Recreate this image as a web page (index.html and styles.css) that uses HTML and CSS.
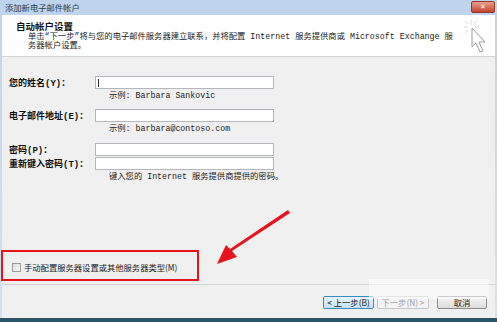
FILE: index.html
```html
<!DOCTYPE html>
<html lang="zh-CN">
<head>
    <meta charset="UTF-8">
    <title>添加新电子邮件帐户</title>
    <link rel="stylesheet" href="styles.css">
</head>
<body>
    <div class="window">
        <div class="titlebar">
            <span class="title">添加新电子邮件帐户</span>
            <span class="close-btn">✕</span>
        </div>
        <div class="client">
            <div class="header">
                <div class="header-title">自动帐户设置</div>
                <div class="header-desc">单击“下一步”将与您的电子邮件服务器建立联系，并将配置 Internet 服务提供商或 Microsoft Exchange 服<br>务器帐户设置。</div>
            </div>
            <div class="form">
                <div class="row">
                    <label class="form-label">您的姓名(Y)：</label>
                    <div class="input-field"><span class="caret"></span></div>
                </div>
                <div class="hint">示例: Barbara Sankovic</div>
                <div class="row spaced">
                    <label class="form-label">电子邮件地址(E)：</label>
                    <div class="input-field"></div>
                </div>
                <div class="hint">示例: barbara@contoso.com</div>
                <div class="row spaced-lg">
                    <label class="form-label">密码(P)：</label>
                    <div class="input-field"></div>
                </div>
                <div class="row spaced-sm">
                    <label class="form-label">重新键入密码(T)：</label>
                    <div class="input-field"></div>
                </div>
                <div class="hint">键入您的 Internet 服务提供商提供的密码。</div>
            </div>
            <div class="manual-box">
                <span class="checkbox"></span>
                <span class="manual-text">手动配置服务器设置或其他服务器类型(M)</span>
            </div>
            <div class="footer">
                <button class="btn btn-focus">&lt; 上一步(B)</button>
                <button class="btn btn-disabled">下一步(N) &gt;</button>
                <button class="btn btn-cancel">取消</button>
            </div>
        </div>
        <div class="bottom-edge"></div>

        <svg class="red-arrow" width="90" height="65" viewBox="0 0 90 65">
            <polygon points="78,6 80,9 22,47 27,53 7,60 16,41 20,45" fill="#e8141c"/>
        </svg>
        <svg class="cursor" width="26" height="36" viewBox="0 0 26 36">
            <g stroke="#d8d8d8" stroke-width="1">
                <line x1="9" y1="1" x2="9" y2="6"/>
                <line x1="2" y1="8" x2="6" y2="8"/>
                <line x1="3" y1="2" x2="6" y2="5"/>
                <line x1="15" y1="2" x2="12" y2="5"/>
                <line x1="3" y1="14" x2="6" y2="11"/>
                <line x1="13" y1="8" x2="17" y2="8"/>
            </g>
            <polygon points="10,9 10,28 14,24 18,33 21,32 17,23 23,23" fill="#ffffff" stroke="#9a9a9a" stroke-width="1"/>
        </svg>
        <div class="watermark"></div>
    </div>
</body>
</html>
```

FILE: styles.css
```css
body {
    margin: 0;
    padding: 0;
    font-family: "Liberation Mono", "Noto Sans CJK SC", monospace;
    font-size: 8.3px;
    color: #1a1a1a;
}

.window {
    position: relative;
    width: 497px;
    height: 322px;
    display: flex;
    flex-direction: column;
    background: linear-gradient(to bottom, #bfd4ec, #d3e2f3);
    overflow: hidden;
}

.titlebar {
    height: 15px;
    display: flex;
    align-items: center;
    justify-content: space-between;
    padding: 0 2px 0 5px;
}

.title {
    font-family: "Noto Sans CJK SC", sans-serif;
    font-size: 8.3px;
    color: #2a3a4a;
    line-height: 15px;
}

.close-btn {
    width: 22px;
    height: 10px;
    margin-top: -1px;
    background: linear-gradient(to bottom, #e8a08c, #c8422c);
    border: 1px solid #8c3a2c;
    border-radius: 2px;
    color: #ffffff;
    font-size: 7px;
    line-height: 10px;
    text-align: center;
    font-family: "DejaVu Sans", sans-serif;
    font-weight: bold;
}

.client {
    flex: 1;
    margin: 0 2px;
    background-color: #f0f0f0;
    display: flex;
    flex-direction: column;
}

.header {
    height: 42px;
    background-color: #ffffff;
    border-bottom: 1px solid #d5d5d5;
    padding-left: 14px;
    box-sizing: border-box;
    padding-top: 6px;
}

.header-title {
    font-family: "Noto Sans CJK SC", sans-serif;
    font-size: 9.5px;
    font-weight: bold;
    line-height: 10px;
    color: #111111;
}

.header-desc {
    margin-top: 1px;
    padding-left: 12px;
    line-height: 9px;
    font-size: 8.3px;
    white-space: nowrap;
}

.form {
    padding: 19px 0 0 7px;
}

.row {
    display: flex;
    align-items: center;
    height: 13px;
}

.spaced {
    margin-top: 7px;
}

.spaced-lg {
    margin-top: 8px;
}

.spaced-sm {
    margin-top: 1px;
}

.form-label {
    width: 86px;
    font-size: 9px;
    font-weight: bold;
    white-space: nowrap;
    color: #111111;
}

.input-field {
    width: 179px;
    height: 13px;
    box-sizing: border-box;
    background-color: #ffffff;
    border: 1px solid #b4b8bd;
    position: relative;
}

.caret {
    position: absolute;
    left: 2px;
    top: 2px;
    width: 1px;
    height: 8px;
    background-color: #333333;
}

.hint {
    padding-left: 100px;
    height: 13px;
    line-height: 13px;
    white-space: nowrap;
    color: #222222;
}

.manual-box {
    margin-top: 67px;
    margin-left: -1px;
    width: 198px;
    height: 31px;
    box-sizing: border-box;
    border: 2px solid #e8141c;
    padding: 11px 0 0 9px;
    display: flex;
    align-items: flex-start;
}

.checkbox {
    width: 9px;
    height: 9px;
    box-sizing: border-box;
    border: 1px solid #9c9c9c;
    background: linear-gradient(135deg, #dcdcdc, #f8f8f8);
    margin-right: 3px;
}

.manual-text {
    font-family: "Noto Sans CJK SC", sans-serif;
    font-size: 8.3px;
    line-height: 9px;
    white-space: nowrap;
}

.footer {
    margin-top: 3px;
    border-top: 1px solid #d5d5d5;
    padding: 11px 8px 0 0;
    display: flex;
    justify-content: flex-end;
    gap: 3px;
}

.btn {
    height: 13px;
    padding: 0;
    box-sizing: border-box;
    font-family: "Noto Sans CJK SC", sans-serif;
    font-size: 8.3px;
    line-height: 11px;
    border-radius: 2px;
    color: #1a1a1a;
}

.btn-focus {
    width: 51px;
    border: 1px solid #3c8ac4;
    background: linear-gradient(to bottom, #e8f4fc, #c4e2f6);
}

.btn-disabled {
    width: 52px;
    border: 1px solid #c4c8cc;
    background-color: #f4f4f4;
    color: #a0a0a0;
}

.btn-cancel {
    width: 50px;
    margin-left: 5px;
    border: 1px solid #8a8a8a;
    background: linear-gradient(to bottom, #f6f6f6, #dcdcdc);
}

.bottom-edge {
    height: 4px;
    background-color: #2b5566;
}

.red-arrow {
    position: absolute;
    left: 210px;
    top: 204px;
}

.cursor {
    position: absolute;
    left: 462px;
    top: 19px;
}

.watermark {
    position: absolute;
    left: 369px;
    top: 279px;
    width: 120px;
    height: 20px;
    background-color: rgba(255, 255, 255, 0.55);
}
```
